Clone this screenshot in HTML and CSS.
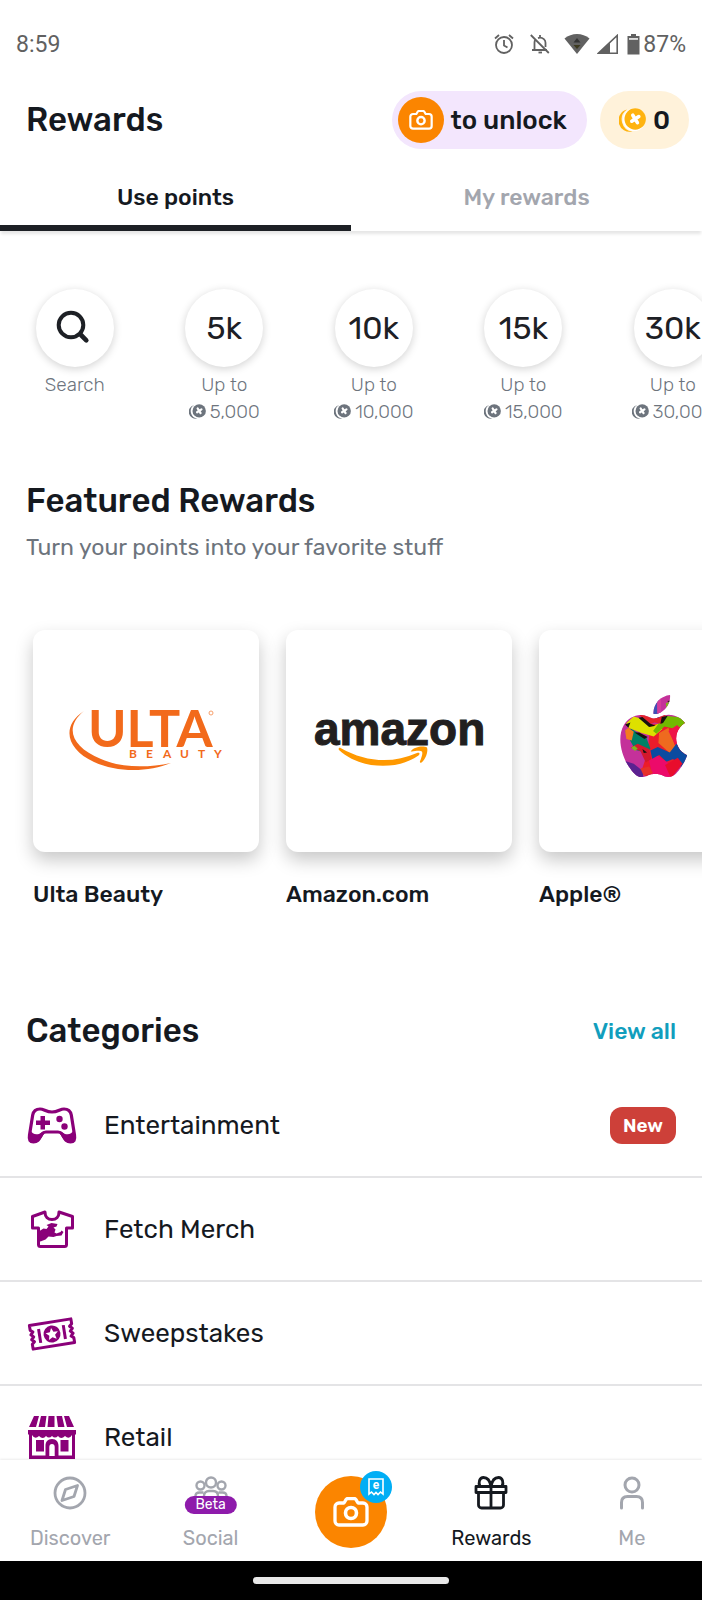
FILE: index.html
```html
<!DOCTYPE html>
<html lang="en">
<head>
    <meta charset="UTF-8">
    <meta name="viewport" content="width=device-width, initial-scale=1.0">
    <title>Rewards</title>
    <link rel="stylesheet" href="styles.css">
</head>
<body>
    <!-- Shared icons -->
    <svg class="sprite" aria-hidden="true">
        <symbol id="camera" viewBox="0 0 36 30">
            <path d="M6 6h5l2-3.400c.4-.7 1-1.100 1.800-1.100h6.400c.8 0 1.400.4 1.800 1.100L25 6h5a4 4 0 0 1 4 4v14a4 4 0 0 1-4 4H6a4 4 0 0 1-4-4V10a4 4 0 0 1 4-4z" fill="none" stroke="currentColor" stroke-width="3.300" stroke-linejoin="round"/>
            <circle cx="18" cy="16" r="5.500" fill="none" stroke="currentColor" stroke-width="3.600"/>
        </symbol>
        <symbol id="coin" viewBox="0 0 27 24">
            <path d="M8 1.500A12 12 0 0 0 13.500 23.400 10.500 10.500 0 1 1 8 1.500z" fill="currentColor"/>
            <circle cx="15.200" cy="11.600" r="11.400" fill="#fff"/>
            <circle cx="16.200" cy="11" r="10.700" fill="currentColor"/>
            <path d="M13.800 7.200l4.600 7.400M19.800 8.600l-7 4.600" stroke="#fff" stroke-width="3.600" stroke-linecap="round"/>
        </symbol>
    </svg>

    <div class="status-bar">
        <span>8:59</span>
        <div class="status-icons">
            <svg width="20" height="20" viewBox="0 0 20 20" fill="none" stroke="currentColor" stroke-width="1.800">
                <circle cx="10" cy="11" r="8"/><path d="M10 6v5.500l3.500 2M1 4.500l4-3.500M19 4.500L15 1"/>
            </svg>
            <svg class="bell" width="20" height="20" viewBox="0 0 20 20" fill="none" stroke="currentColor" stroke-width="1.800">
                <path d="M2 16h15M4.500 15V8.500c0-1 .3-2 .8-2.800M8 4.200c.7-.3 1.400-.5 2-.5 3 0 5.500 2.300 5.500 5V13M10 1v2.500M.8 1l18 18"/><path d="M8.500 18.500h3.500"/>
            </svg>
            <svg class="wifi" width="26" height="20" viewBox="0 0 26 20">
                <path d="M13 20L.5 4.500C4 1.500 8.500 0 13 0s9 1.500 12.500 4.500z" fill="currentColor"/>
                <path d="M13 4l3.500 4.500h-7z" fill="#333"/><path d="M13 15l-3.500-4h7z" fill="#3d3a20"/>
            </svg>
            <svg class="signal" width="22" height="20" viewBox="0 0 22 20">
                <path d="M1.500 19.200L20.200 1.500v17.700z" fill="#fff" stroke="currentColor" stroke-width="1.600"/><path d="M1 20L13 8.500V20z" fill="currentColor"/>
            </svg>
            <svg class="battery" width="13" height="21" viewBox="0 0 13 21">
                <path d="M4 0h5v2h3.500v18.500h-12V2H4z" fill="currentColor"/><path d="M2 4.200h9v1.500H2z" fill="#fff"/>
            </svg>
            <span>87%</span>
        </div>
    </div>

    <header class="header">
        <h1>Rewards</h1>
        <div class="pills">
            <button class="pill unlock">
                <span class="unlock-icon"><svg width="24" height="20"><use href="#camera"/></svg></span>
                to unlock
            </button>
            <button class="pill points">
                <svg width="27" height="24"><use href="#coin"/></svg>
                0
            </button>
        </div>
    </header>

    <nav class="tabs">
        <a class="tab active" href="#use">Use points</a>
        <a class="tab" href="#mine">My rewards</a>
    </nav>

    <main class="content">
        <div class="filters">
            <a class="filter" href="#search">
                <span class="filter-circle">
                    <svg width="38" height="36" viewBox="0 0 38 36" fill="none" stroke="currentColor" stroke-linecap="round"><circle cx="15" cy="15" r="12.300" stroke-width="4"/><path d="M25 25l5.300 5.300" stroke-width="4.600"/></svg>
                </span>
                <span>Search</span>
            </a>
            <a class="filter" href="#5k">
                <span class="filter-circle">5k</span>
                <span>Up to</span>
                <span class="amount"><svg width="17" height="15"><use href="#coin"/></svg>5,000</span>
            </a>
            <a class="filter" href="#10k">
                <span class="filter-circle">10k</span>
                <span>Up to</span>
                <span class="amount"><svg width="17" height="15"><use href="#coin"/></svg>10,000</span>
            </a>
            <a class="filter" href="#15k">
                <span class="filter-circle">15k</span>
                <span>Up to</span>
                <span class="amount"><svg width="17" height="15"><use href="#coin"/></svg>15,000</span>
            </a>
            <a class="filter" href="#30k">
                <span class="filter-circle">30k</span>
                <span>Up to</span>
                <span class="amount"><svg width="17" height="15"><use href="#coin"/></svg>30,000</span>
            </a>
        </div>

        <section class="featured">
            <h2>Featured Rewards</h2>
            <p class="subtitle">Turn your points into your favorite stuff</p>
            <div class="cards">
                <a class="card" href="#ulta">
                    <span class="card-image">
                        <svg width="156" height="64" viewBox="-1 0 156 64" fill="#f26a1b">
                            <path d="M15 2C-8 17-3 40 25 53c24 11 55 10 77 1-24 5-50 5-70-4C2 38-5 18 15 2z"/>
                            <text class="ulta-name" x="19" y="38">ULTA</text>
                            <text class="ulta-sub" x="60 77 94 111 129 145" y="49">BEAUTY</text>
                            <circle cx="142" cy="4" r="2" fill="none" stroke="#f7a06c"/>
                        </svg>
                    </span>
                    <span class="card-name">Ulta Beauty</span>
                </a>
                <a class="card" href="#amazon">
                    <span class="card-image">
                        <svg width="170" height="54" viewBox="0 0 170 54">
                            <text class="amazon-name" x="0" y="31">amazon</text>
                            <g fill="#ff9900"><path d="M25 36c-1-1.500.3-3 2-1.800 24 13.500 51 16 76 4.800 2.500-1 3.500 1 1.500 2.500C83 57 45 55 25 36z"/><path d="M97 37c3-4 12-5.500 16-3.500 1.500 4-1.500 12-5.500 15-1 .7-2-.2-1.500-1.300 1.500-3.500 3-8 2-9.500s-6.500-1-10-.2c-1.200.2-1.700-.2-1-.5z"/></g>
                        </svg>
                    </span>
                    <span class="card-name">Amazon.com</span>
                </a>
                <a class="card" href="#apple">
                    <span class="card-image">
                        <svg width="82" height="92" viewBox="-.5 0 24 26.900">
                            <clipPath id="apple"><path d="M12.152 6.896c-.948 0-2.415-1.078-3.960-1.040-2.040.027-3.910 1.183-4.961 3.014-2.117 3.675-.546 9.103 1.519 12.090 1.013 1.454 2.208 3.090 3.792 3.039 1.520-.065 2.090-.987 3.935-.987 1.831 0 2.350.987 3.960.948 1.637-.026 2.676-1.480 3.676-2.948 1.156-1.688 1.636-3.325 1.662-3.415-.039-.013-3.182-1.221-3.220-4.857-.026-3.040 2.480-4.494 2.597-4.559-1.429-2.090-3.623-2.324-4.390-2.376-2-.156-3.675 1.090-4.610 1.090zM15.530 3.830c.843-1.012 1.400-2.427 1.245-3.830-1.207.052-2.662.805-3.532 1.818-.78.896-1.454 2.338-1.273 3.714 1.338.104 2.715-.688 3.559-1.701"/></clipPath>
                            <g clip-path="url(#apple)">
                                <g transform="translate(-3.800 -4.100) scale(.0976)">
                                    <path d="M50 30h230v270H50z" fill="#c4319a"/>
                                    <path d="M150 130l110-10 10 100-120 80-25-30 20-60z" fill="#ec1c2b"/>
                                    <path d="M76 150l18-8 20 14 26 14 12 32-12 14-34-10-16-30z" fill="#008066"/>
                                    <path d="M92 200l22-12 34 16 6 30-16 10-16-34z" fill="#d3182c"/>
                                    <path d="M94 200l10-6 10 8-8 8z" fill="#7ab51d"/>
                                    <path d="M80 126l22-20 26 8 24 22 24-8 12 16-26 22-36-10-40-16z" fill="#dde000"/>
                                    <path d="M160 150l34-46 80 8-16 18-30 14-34-8-24 22z" fill="#71b900"/>
                                    <path d="M118 100h80l-12 28-22-4-18 8z" fill="#e3242b"/>
                                    <path d="M76 148l10-8 16 12-6 26-16-4z" fill="#f47b20"/>
                                    <path d="M178 156l28-16 22 60-18 16-34-30z" fill="#ee6a1f"/>
                                    <path d="M206 150l26-18 20 20-20 50z" fill="#ee1447"/>
                                    <path d="M152 208l22-10 36 16 20-26 44 26-30 44-24-24-20 8-22-20-20 14z" fill="#0b4ba0"/>
                                    <path d="M148 238l26-14 32 22 24-8 12 18-30 36-54-6z" fill="#ec0a6a"/>
                                    <path d="M196 252l38-22 14 18-34 44z" fill="#e80d2c"/>
                                    <path d="M76 240l26 8 30 24-4 22-36-10z" fill="#5a2290"/>
                                    <path d="M122 262l26-6 12 20-28 8z" fill="#e7302a"/>
                                    <path d="M76 130l16-6-6 16zM116 110l12-2 24 20 16 6-20 4zM104 154l14 0 26 14-10 6zM186 108l18-4-14 22-8 2zM128 204l14 10-10 2z" fill="#16110f"/>
                                    <path d="M158 30h20v80h-20z" fill="#3f51b5"/>
                                    <path d="M172 60l12-12v50h-12z" fill="#d43c9b"/>
                                    <path d="M198 66l16-4v20l-14-2z" fill="#7ab51d"/>
                                    <path d="M202 60l14-2v10z" fill="#16110f"/>
                                </g>
                            </g>
                        </svg>
                    </span>
                    <span class="card-name">Apple®</span>
                </a>
            </div>
        </section>

        <section class="categories">
            <div class="categories-head">
                <h2>Categories</h2>
                <a class="view-all" href="#all">View all</a>
            </div>
            <a class="category" href="#entertainment">
                <svg width="50" height="50" viewBox="0 -1 50 50" fill="currentColor">
                    <path d="M13 8c-4 0-6.500 2-7.300 6L2.500 34c-.8 5 .5 7 4 7 5 0 6-4 8.500-8 1-1.500 2.500-2 4-2h12c1.500 0 3 .5 4 2 2.500 4 3.500 8 8.500 8 3.500 0 4.800-2 4-7l-3.200-20C43.500 10 41 8 37 8c-4 0-6 3-12 3S17 8 13 8z" fill="none" stroke="currentColor" stroke-width="3.200"/>
                    <path d="M3.500 29c2 5 7 5.500 11 2.500l3 .5c-3 4-4 9.500-11 9.500-5 0-4.500-5-3-12.500zM46.500 29c-2 5-7 5.500-11 2.500l-3 .5c3 4 4 9.500 11 9.500 5 0 4.500-5 3-12.500zM13.500 15h4.500v4.500h5v4.500h-5v4.500h-4.500V24H9v-4.500h4.500z"/>
                    <circle cx="32.500" cy="18" r="3.200"/><circle cx="37.500" cy="25.500" r="3.200"/>
                </svg>
                <span class="category-name">Entertainment</span>
                <span class="badge">New</span>
            </a>
            <a class="category" href="#merch">
                <svg width="50" height="50" viewBox="0 -1 50 50">
                    <path d="M18 7L5.500 11.500V23h6v16.500c0 1.500.5 2 2 2h24c1.500 0 2-.5 2-2V23h6V11.500L32 7c0 5-3 7.500-7 7.500S18 12 18 7z" fill="none" stroke="currentColor" stroke-width="3" stroke-linejoin="round"/>
                    <path d="M12.500 26l4-2.500 3 .5 2-2.500-2-1.500 5-2 6 1-1 2.500-3 1 2 2-1 3 2 1 4-1.500 1-1.500 2 1.500-2 3.500-5 .5-3 1-5-.5-3 3-5 2-2-1z" fill="currentColor"/>
                </svg>
                <span class="category-name">Fetch Merch</span>
            </a>
            <a class="category" href="#sweepstakes">
                <svg width="50" height="50" viewBox="0 -1 50 50">
                    <g transform="rotate(-9 25 25)" fill="none" stroke="currentColor" stroke-width="3">
                        <path d="M4 13h42v5l-2.500 2 2.500 2.500-2.500 2.500 2.500 2.500-2.500 2.500 2.500 2v5H4v-5l2.500-2L4 27.500 6.500 25 4 22.500 6.500 20 4 18z" stroke-linejoin="round"/>
                        <path d="M12.500 18v14M37.500 18v14"/>
                        <circle cx="25" cy="25" r="8.500" fill="currentColor" stroke="none"/>
                        <path d="M25 18.800l1.800 4.100 4.400.4-3.300 2.900 1 4.300-3.900-2.300-3.900 2.300 1-4.300-3.300-2.900 4.400-.4z" fill="#fff" stroke="none"/>
                    </g>
                </svg>
                <span class="category-name">Sweepstakes</span>
            </a>
            <a class="category" href="#retail">
                <svg width="50" height="50" viewBox="0 -1 50 50" fill="currentColor">
                    <path d="M7 3h5L9 14H2zM14 3h5.500L18 14h-6.500zM21.500 3h6v11h-7zM29.500 3H35l2.500 11H31zM37 3h5l5 11h-7z"/>
                    <path d="M1 17h48v4.500h-1V46H2V21.500H1z"/>
                    <path d="M5 22q3 5 7 1 4 4 7 0 3 3 6 0 3 3 6 0 3 4 7 0 4 4 7-1v20.500H31.500V33c0-4-2-7-6.500-7s-6.500 3-6.500 7v9.500H5z" fill="#fff"/>
                    <path d="M9 27h8v11.500H9zM33.500 27h8v11.500h-8z"/>
                    <path d="M22.300 43v-9c0-2 1-3 2.700-3s2.700 1 2.700 3v9z" fill="#fff"/>
                </svg>
                <span class="category-name">Retail</span>
            </a>
        </section>
    </main>

    <nav class="bottom-nav">
        <a class="nav-item" href="#discover">
            <svg width="34" height="34" viewBox="0 0 34 34" fill="none" stroke="currentColor" stroke-width="2.800" stroke-linejoin="round"><circle cx="17" cy="17" r="15"/><path d="M24.500 9.500l-3.500 11-12 4 3.500-11z"/></svg>
            Discover
        </a>
        <a class="nav-item" href="#social">
            <span class="social-icon">
                <svg width="34" height="34" viewBox="0 0 34 34" fill="none" stroke="currentColor" stroke-width="2.400"><circle cx="17" cy="6.500" r="5"/><circle cx="6.500" cy="9.500" r="4"/><circle cx="27.500" cy="9.500" r="4"/><path d="M10 26v-6c0-3 2-5 5-5h4c3 0 5 2 5 5v6M1.500 24v-4c0-2 1.500-3.500 4-3.500h4M32.500 24v-4c0-2-1.500-3.500-4-3.500h-4"/></svg>
                <span class="beta">Beta</span>
            </span>
            Social
        </a>
        <a class="nav-item" href="#snap" aria-label="Snap">
            <span class="snap-button">
                <svg width="36" height="30"><use href="#camera"/></svg>
                <span class="snap-badge">
                    <svg width="18" height="20" viewBox="0 0 18 20" fill="none" stroke="#fff" stroke-width="1.600"><path d="M2 2h14v15l-2.500-2-2.500 2.500-2-2-2 2L4.500 15 2 17z"/><text class="receipt-e" x="9" y="12">e</text></svg>
                </span>
            </span>
        </a>
        <a class="nav-item active" href="#rewards">
            <svg width="34" height="34" viewBox="0 0 34 34" fill="none" stroke="currentColor" stroke-width="2.800" stroke-linejoin="round"><path d="M2 10.500h30v6H2zM4.500 16.500h25V29a3 3 0 0 1-3 3h-19a3 3 0 0 1-3-3zM17 10.500V32M17 10.500c-1-6-4-9-7.500-9-4 0-5.500 5-3.500 9M17 10.500c1-6 4-9 7.500-9 4 0 5.500 5 3.500 9"/></svg>
            Rewards
        </a>
        <a class="nav-item" href="#me">
            <svg width="34" height="34" viewBox="0 0 34 34" fill="none" stroke="currentColor" stroke-width="3" stroke-linecap="round"><circle cx="17" cy="9" r="7"/><path d="M6.500 32v-5.500c0-4 2.500-6 6-6h9c3.500 0 6 2 6 6V32"/></svg>
            Me
        </a>
    </nav>
    <div class="home-bar"><span></span></div>
</body>
</html>
```

FILE: styles.css
```css
* {
    box-sizing: border-box;
}
body {
    margin: 0;
    height: 100vh;
    display: flex;
    flex-direction: column;
    overflow: hidden;
    background-color: #fff;
    color: #15191f;
    font-family: Rubik, Roboto, sans-serif;
    font-weight: 350;
}
a {
    color: inherit;
    text-decoration: none;
}
h1, h2, p {
    margin: 0;
}
svg {
    display: block;
    flex: none;
}
.sprite {
    position: absolute;
    width: 0;
    height: 0;
}

/* Status bar */
.status-bar {
    display: flex;
    justify-content: space-between;
    align-items: center;
    height: 88px;
    padding: 0 16px;
    font-family: Roboto, sans-serif;
    font-size: 23px;
    font-weight: 400;
    color: #616161;
}
.status-icons {
    display: flex;
    align-items: center;
}
.bell {
    margin-left: 16px;
}
.wifi {
    margin-left: 14px;
}
.signal {
    margin-left: 7px;
}
.battery {
    margin: 0 3px 0 8px;
}

/* Header */
.header {
    display: flex;
    justify-content: space-between;
    align-items: center;
    height: 64px;
    padding: 0 13px 0 26px;
}
h1, h2 {
    font-size: 33px;
    line-height: 40px;
    font-weight: 500;
}
.pills {
    display: flex;
    gap: 13px;
}
.pill {
    display: flex;
    align-items: center;
    height: 58px;
    border: none;
    border-radius: 29px;
    font-family: inherit;
    font-size: 26px;
    font-weight: 500;
    color: inherit;
    cursor: pointer;
}
.unlock {
    gap: 7px;
    padding: 0 20px 0 6px;
    background-color: #f3e6fd;
}
.unlock-icon {
    display: flex;
    align-items: center;
    justify-content: center;
    width: 46px;
    height: 46px;
    border-radius: 50%;
    background-color: #fb8500;
    color: #fff;
}
.points {
    gap: 7px;
    padding: 0 19px;
    background-color: #fff2da;
}
.points svg {
    color: #ffb30f;
}

/* Tabs */
.tabs {
    display: flex;
    height: 79px;
    flex: none;
    box-shadow: 0 4px 3px -1px rgba(0, 0, 0, 0.1);
}
.tab {
    flex: 1;
    padding-top: 30px;
    text-align: center;
    font-size: 23px;
    line-height: 30px;
    font-weight: 500;
    color: #a3a6ae;
}
.tab.active {
    color: #15191f;
    border-bottom: 6px solid #1d2025;
}

.content {
    flex: 1;
    min-height: 0;
    overflow: hidden;
}

/* Point filters */
.filters {
    display: flex;
    padding-top: 58px;
    height: 242px;
}
.filter {
    flex: 0 0 21.3%;
    display: flex;
    flex-direction: column;
    align-items: center;
    font-size: 19px;
    line-height: 27px;
    color: #6d747d;
}
.filter-circle {
    display: flex;
    align-items: center;
    justify-content: center;
    width: 78px;
    height: 78px;
    margin-bottom: 4px;
    border-radius: 50%;
    box-shadow: 0 2px 8px rgba(0, 0, 0, 0.18);
    font-size: 32px;
    font-weight: 400;
    color: #1d2025;
}
.amount {
    display: flex;
    align-items: center;
    gap: 4px;
}

/* Featured rewards */
.featured {
    height: 534px;
    padding-top: 8px;
}
.featured h2 {
    padding-left: 26px;
}
.subtitle {
    padding: 11px 26px 0;
    font-size: 23px;
    font-weight: 400;
    line-height: 30px;
    color: #6d747d;
}
.cards {
    display: flex;
    gap: 27px;
    padding: 68px 33px 0;
}
.card {
    flex: 0 0 226px;
    display: flex;
    flex-direction: column;
    gap: 27px;
}
.card-image {
    display: flex;
    align-items: center;
    justify-content: center;
    height: 222px;
    border-radius: 12px;
    box-shadow: 0 8px 18px rgba(0, 0, 0, 0.22);
}
.card-image svg {
    overflow: visible;
}
.card-name {
    font-size: 23px;
    line-height: 30px;
    font-weight: 500;
}
.ulta-name {
    font: 700 52px Lato, sans-serif;
}
.ulta-sub {
    font: 700 12px Lato, sans-serif;
}
.amazon-name {
    font: 700 46px "Liberation Sans", sans-serif;
    fill: #221f1f;
    stroke: #221f1f;
}

/* Categories */
.categories-head {
    display: flex;
    justify-content: space-between;
    align-items: center;
    height: 48px;
    margin-bottom: 19px;
    padding: 0 26px;
}
.view-all {
    font-size: 23px;
    font-weight: 500;
    color: #119ebd;
}
.category {
    display: flex;
    align-items: center;
    gap: 27px;
    height: 104px;
    padding: 0 26px 0 27px;
    border-bottom: 2px solid #e4e4e6;
}
.category svg {
    color: #8a0079;
}
.category-name {
    flex: 1;
    font-size: 26px;
    font-weight: 400;
}
.badge {
    padding: 0 13px;
    border-radius: 12px;
    background-color: #cd4039;
    color: #fff;
    font-size: 19px;
    line-height: 37px;
    font-weight: 600;
}

/* Bottom navigation */
.bottom-nav {
    flex: none;
    display: flex;
    height: 101px;
    background-color: #fff;
    box-shadow: 0 -1px 2px rgba(0, 0, 0, 0.08);
}
.nav-item {
    flex: 1;
    display: flex;
    flex-direction: column;
    align-items: center;
    gap: 15px;
    padding-top: 16px;
    font-size: 20px;
    font-weight: 400;
    line-height: 27px;
    color: #a3a6ae;
}
.nav-item.active {
    color: #15191f;
}
.social-icon {
    position: relative;
}
.beta {
    position: absolute;
    top: 20px;
    left: 50%;
    transform: translateX(-50%);
    padding: 0 11px;
    border-radius: 9px;
    background-color: #8e1bab;
    color: #fff;
    font-size: 14px;
    line-height: 18px;
}
.snap-button {
    position: relative;
    display: flex;
    align-items: center;
    justify-content: center;
    width: 72px;
    height: 72px;
    border-radius: 50%;
    background-color: #fb8500;
    color: #fff;
}
.snap-badge {
    position: absolute;
    top: -5px;
    right: -5px;
    display: flex;
    align-items: center;
    justify-content: center;
    width: 32px;
    height: 32px;
    border-radius: 50%;
    background-color: #00aef5;
}
.receipt-e {
    font: 700 12px Roboto, sans-serif;
    fill: #fff;
    stroke: none;
    text-anchor: middle;
}
.home-bar {
    flex: none;
    display: flex;
    align-items: center;
    justify-content: center;
    height: 39px;
    background-color: #000;
}
.home-bar span {
    width: 28%;
    height: 7px;
    border-radius: 4px;
    background-color: #e8e8e8;
}
```
